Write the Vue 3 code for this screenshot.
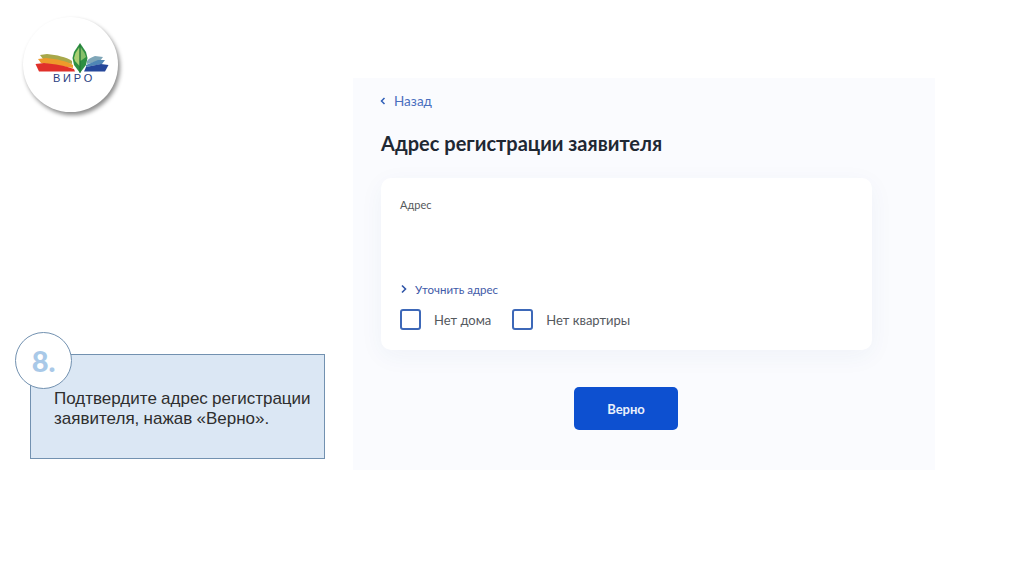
<script setup>
const checks = ['Нет дома', 'Нет квартиры']
</script>

<template>
  <main class="slide">
    <aside class="left">
      <div class="logo">
        <svg class="logo-art" viewBox="0 0 76 31" width="76" height="31">
          <path d="M7 13 L14 12 C24 13 33 15 39 19 L39 22 L10 17 Z" fill="#a8a84a" />
          <path d="M5 17 L13 16 C24 17 33 19 40 23 L40 26 L8 21 Z" fill="#ee9a2b" />
          <path d="M2.500 22 L11 21 C22 22 33 24 41 27 L42 29.500 L6 29.500 Z" fill="#e0302a" />
          <path d="M70 15 L62 14 C60 15 56 16 54 19 L54 22 L67 19 Z" fill="#7fa6b8" />
          <path d="M72 18 L65 18 L53 23 L53 25 L69 22 Z" fill="#4f86b5" />
          <path d="M75.500 23 L68 22 L53 25 L51 29.500 L72 29.500 Z" fill="#25479a" />
          <path d="M47 1 L41 10 L39.500 16 L41 23 L47 31 L53 23 L54.500 16 L53 10 Z" fill="#2e8f42" />
          <path d="M46.500 5 L42.500 11 L41 16 L42 19 L46.500 24 Z" fill="#a9cf72" />
          <path d="M47.500 5 L51.500 11 L53 15 L47.500 19 Z" fill="#86c06a" />
          <path d="M47 3 V31" stroke="#1d6b33" stroke-width="0.800" fill="none" />
        </svg>
        <span class="logo-name">ВИРО</span>
      </div>

      <div class="callout">
        <span class="badge">8.</span>
        <p class="callout-text">Подтвердите адрес регистрации заявителя, нажав «Верно».</p>
      </div>
    </aside>

    <section class="panel">
      <a class="back">
        <svg viewBox="0 0 8 10" width="8" height="10">
          <path d="M5.500 2 L2.500 5 L5.500 8" fill="none" stroke="#2f5fb8" stroke-width="1.500" />
        </svg>
        Назад
      </a>
      <h1 class="title">Адрес регистрации заявителя</h1>

      <div class="card">
        <div class="label">Адрес</div>
        <a class="refine">
          <svg viewBox="0 0 8 10" width="8" height="10">
            <path d="M2 1.500 L5.500 5 L2 8.500" fill="none" stroke="#2f55a8" stroke-width="1.600" />
          </svg>
          Уточнить адрес
        </a>
        <div class="checks">
          <label v-for="item in checks" :key="item" class="check">
            <span class="box"></span>
            {{ item }}
          </label>
        </div>
      </div>

      <div class="actions">
        <button class="submit">Верно</button>
      </div>
    </section>
  </main>
</template>

<style>
html, body {
  background: #fff;
}
</style>

<style scoped>
.slide {
  width: 1024px;
  height: 576px;
  display: flex;
  overflow: hidden;
  background: #fff;
}

.left {
  width: 353px;
  padding: 17px 0 0 23px;
  box-sizing: border-box;
}

.logo {
  width: 95px;
  height: 95px;
  border-radius: 50%;
  background: #fff;
  box-shadow: 2px 3px 4px rgba(0, 0, 0, 0.45);
  display: flex;
  flex-direction: column;
  align-items: center;
  padding-top: 25px;
  box-sizing: border-box;
}

.logo-art {
  display: block;
}

.logo-name {
  font-family: "Liberation Sans", sans-serif;
  font-size: 11px;
  letter-spacing: 2.800px;
  line-height: 10px;
  margin-left: 7px;
  color: #2a3f82;
}

.callout {
  position: relative;
  width: 295px;
  height: 105px;
  margin: 242px 0 0 7px;
  padding: 34px 6px 0 23px;
  box-sizing: border-box;
  background: #dbe7f4;
  border: 1.500px solid #7291b0;
}

.badge {
  position: absolute;
  left: -16px;
  top: -23px;
  width: 57px;
  height: 57px;
  box-sizing: border-box;
  border: 1.500px solid #7291b0;
  border-radius: 50%;
  background: #fff;
  color: #a9c9e8;
  font-family: Lato, sans-serif;
  font-size: 29px;
  font-weight: 900;
  display: flex;
  align-items: center;
  justify-content: center;
}

.callout-text {
  margin: 0;
  font-family: "Liberation Sans", sans-serif;
  font-size: 17px;
  word-spacing: -0.500px;
  line-height: 20px;
  color: #2e2e2e;
}

.panel {
  width: 582px;
  height: 392px;
  margin-top: 78px;
  padding: 14px 63px 0 28px;
  box-sizing: border-box;
  background: #fafbfe;
  font-family: Lato, sans-serif;
}

.back {
  display: flex;
  align-items: center;
  gap: 7px;
  height: 18px;
  margin-left: -2px;
  font-size: 13.500px;
  color: #4a6fbe;
}

.title {
  margin: 20px 0 22px;
  font-size: 20px;
  line-height: 26px;
  font-weight: 700;
  color: #1f2833;
}

.card {
  height: 172px;
  padding: 19px 19px 0;
  box-sizing: border-box;
  background: #fff;
  border-radius: 10px;
  box-shadow: 0 6px 24px rgba(40, 70, 130, 0.05);
}

.label {
  font-size: 11px;
  line-height: 16px;
  color: #55585c;
}

.refine {
  display: flex;
  align-items: center;
  gap: 7px;
  margin-top: 69px;
  height: 14px;
  font-size: 11.500px;
  color: #3f5aa8;
}

.checks {
  display: flex;
  gap: 21px;
  margin-top: 13px;
}

.check {
  display: flex;
  align-items: center;
  gap: 13px;
  font-size: 13px;
  color: #55595e;
}

.box {
  width: 21px;
  height: 21px;
  box-sizing: border-box;
  border: 2px solid #3d68b8;
  border-radius: 3px;
}

.actions {
  display: flex;
  justify-content: center;
  margin-top: 37px;
  padding-right: 1px;
}

.submit {
  width: 104px;
  height: 43px;
  border: none;
  border-radius: 5px;
  background: #0d50d0;
  color: #eaf0fb;
  font-family: Lato, sans-serif;
  font-size: 13px;
  font-weight: 700;
}
</style>
